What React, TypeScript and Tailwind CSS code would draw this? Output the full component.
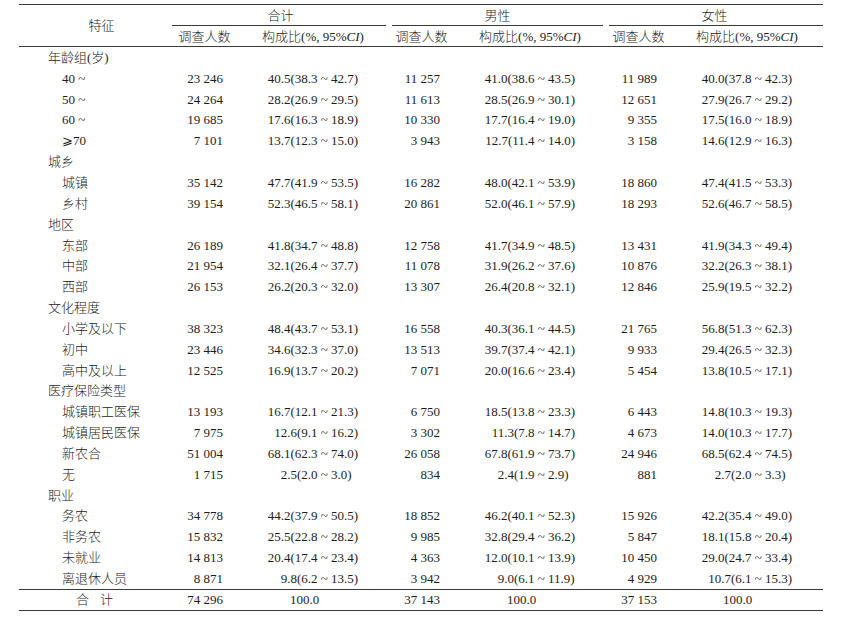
import React from "react";

const cols = "grid grid-cols-[153px_65px_152px_65px_152px_65px_152px]";

type Row =
  | { kind: "cat"; label: string }
  | { kind: "data"; label: string; v: string[] };

const rows: Row[] = [
  { kind: "cat", label: "年龄组(岁)" },
  { kind: "data", label: "40 ~", v: ["23 246", "40.5(38.3 ~ 42.7)", "11 257", "41.0(38.6 ~ 43.5)", "11 989", "40.0(37.8 ~ 42.3)"] },
  { kind: "data", label: "50 ~", v: ["24 264", "28.2(26.9 ~ 29.5)", "11 613", "28.5(26.9 ~ 30.1)", "12 651", "27.9(26.7 ~ 29.2)"] },
  { kind: "data", label: "60 ~", v: ["19 685", "17.6(16.3 ~ 18.9)", "10 330", "17.7(16.4 ~ 19.0)", "9 355", "17.5(16.0 ~ 18.9)"] },
  { kind: "data", label: "⩾70", v: ["7 101", "13.7(12.3 ~ 15.0)", "3 943", "12.7(11.4 ~ 14.0)", "3 158", "14.6(12.9 ~ 16.3)"] },
  { kind: "cat", label: "城乡" },
  { kind: "data", label: "城镇", v: ["35 142", "47.7(41.9 ~ 53.5)", "16 282", "48.0(42.1 ~ 53.9)", "18 860", "47.4(41.5 ~ 53.3)"] },
  { kind: "data", label: "乡村", v: ["39 154", "52.3(46.5 ~ 58.1)", "20 861", "52.0(46.1 ~ 57.9)", "18 293", "52.6(46.7 ~ 58.5)"] },
  { kind: "cat", label: "地区" },
  { kind: "data", label: "东部", v: ["26 189", "41.8(34.7 ~ 48.8)", "12 758", "41.7(34.9 ~ 48.5)", "13 431", "41.9(34.3 ~ 49.4)"] },
  { kind: "data", label: "中部", v: ["21 954", "32.1(26.4 ~ 37.7)", "11 078", "31.9(26.2 ~ 37.6)", "10 876", "32.2(26.3 ~ 38.1)"] },
  { kind: "data", label: "西部", v: ["26 153", "26.2(20.3 ~ 32.0)", "13 307", "26.4(20.8 ~ 32.1)", "12 846", "25.9(19.5 ~ 32.2)"] },
  { kind: "cat", label: "文化程度" },
  { kind: "data", label: "小学及以下", v: ["38 323", "48.4(43.7 ~ 53.1)", "16 558", "40.3(36.1 ~ 44.5)", "21 765", "56.8(51.3 ~ 62.3)"] },
  { kind: "data", label: "初中", v: ["23 446", "34.6(32.3 ~ 37.0)", "13 513", "39.7(37.4 ~ 42.1)", "9 933", "29.4(26.5 ~ 32.3)"] },
  { kind: "data", label: "高中及以上", v: ["12 525", "16.9(13.7 ~ 20.2)", "7 071", "20.0(16.6 ~ 23.4)", "5 454", "13.8(10.5 ~ 17.1)"] },
  { kind: "cat", label: "医疗保险类型" },
  { kind: "data", label: "城镇职工医保", v: ["13 193", "16.7(12.1 ~ 21.3)", "6 750", "18.5(13.8 ~ 23.3)", "6 443", "14.8(10.3 ~ 19.3)"] },
  { kind: "data", label: "城镇居民医保", v: ["7 975", "12.6(9.1 ~ 16.2)", "3 302", "11.3(7.8 ~ 14.7)", "4 673", "14.0(10.3 ~ 17.7)"] },
  { kind: "data", label: "新农合", v: ["51 004", "68.1(62.3 ~ 74.0)", "26 058", "67.8(61.9 ~ 73.7)", "24 946", "68.5(62.4 ~ 74.5)"] },
  { kind: "data", label: "无", v: ["1 715", "2.5(2.0 ~ 3.0)", "834", "2.4(1.9 ~ 2.9)", "881", "2.7(2.0 ~ 3.3)"] },
  { kind: "cat", label: "职业" },
  { kind: "data", label: "务农", v: ["34 778", "44.2(37.9 ~ 50.5)", "18 852", "46.2(40.1 ~ 52.3)", "15 926", "42.2(35.4 ~ 49.0)"] },
  { kind: "data", label: "非务农", v: ["15 832", "25.5(22.8 ~ 28.2)", "9 985", "32.8(29.4 ~ 36.2)", "5 847", "18.1(15.8 ~ 20.4)"] },
  { kind: "data", label: "未就业", v: ["14 813", "20.4(17.4 ~ 23.4)", "4 363", "12.0(10.1 ~ 13.9)", "10 450", "29.0(24.7 ~ 33.4)"] },
  { kind: "data", label: "离退休人员", v: ["8 871", "9.8(6.2 ~ 13.5)", "3 942", "9.0(6.1 ~ 11.9)", "4 929", "10.7(6.1 ~ 15.3)"] },
];

function Num({ s }: { s: string }) {
  return <div className="text-right pr-[14px] whitespace-pre">{s}</div>;
}

function Pct({ s }: { s: string }) {
  const [l, r] = s.split(" ~ ");
  return (
    <div className="flex">
      <span className="w-[80.5px] shrink-0 text-right whitespace-pre">{l}</span>
      <span className="whitespace-pre">{" ~ " + r}</span>
    </div>
  );
}

function CI() {
  return (
    <span>
      构成比(%, 95%<span className="italic">CI</span>)
    </span>
  );
}

export default function App() {
  return (
    <div
      className="w-[843px] h-[621px] bg-white text-[13px] text-[#1d1d1d] leading-none font-light"
      style={{ fontFamily: "'Liberation Serif', 'Noto Sans CJK SC', serif" }}
    >
      <div className="ml-[19px] pt-[4px] w-[804px]">
        <div className="border-t border-b border-[#3a3a3a]">
          {/* header */}
          <div className={cols}>
            <div className="row-span-2 flex items-center justify-center pl-[12px]">特征</div>
            <div className="col-span-2 flex flex-col">
              <div className="h-[20px] flex items-center justify-center">合计</div>
              <div className="h-px bg-[#3a3a3a] mr-[3px]" />
            </div>
            <div className="col-span-2 flex flex-col">
              <div className="h-[20px] flex items-center justify-center">男性</div>
              <div className="h-px bg-[#3a3a3a] ml-[3px] mr-[3px]" />
            </div>
            <div className="col-span-2 flex flex-col">
              <div className="h-[20px] flex items-center justify-center">女性</div>
              <div className="h-px bg-[#3a3a3a] ml-[3px]" />
            </div>
            <div className="h-[20px] flex items-center justify-center">调查人数</div>
            <div className="h-[20px] flex items-center justify-center"><CI /></div>
            <div className="h-[20px] flex items-center justify-center">调查人数</div>
            <div className="h-[20px] flex items-center justify-center"><CI /></div>
            <div className="h-[20px] flex items-center justify-center">调查人数</div>
            <div className="h-[20px] flex items-center justify-center"><CI /></div>
          </div>
          {/* body */}
          <div className="border-t border-[#3a3a3a]">
            {rows.map((r, i) =>
              r.kind === "cat" ? (
                <div key={i} className="h-[20.85px] flex items-center pl-[29px]">
                  {r.label}
                </div>
              ) : (
                <div key={i} className={`${cols} h-[20.85px] items-center`}>
                  <div className="pl-[43px] whitespace-pre">{r.label}</div>
                  <Num s={r.v[0]} />
                  <Pct s={r.v[1]} />
                  <Num s={r.v[2]} />
                  <Pct s={r.v[3]} />
                  <Num s={r.v[4]} />
                  <Pct s={r.v[5]} />
                </div>
              )
            )}
          </div>
          {/* total */}
          <div className={`${cols} h-[21px] items-center border-t border-[#3a3a3a]`}>
            <div className="pl-[57px]">
              合<span className="ml-[11px]">计</span>
            </div>
            <Num s="74 296" />
            <div className="pl-[53px]">100.0</div>
            <Num s="37 143" />
            <div className="pl-[53px]">100.0</div>
            <Num s="37 153" />
            <div className="pl-[52px]">100.0</div>
          </div>
        </div>
      </div>
    </div>
  );
}
